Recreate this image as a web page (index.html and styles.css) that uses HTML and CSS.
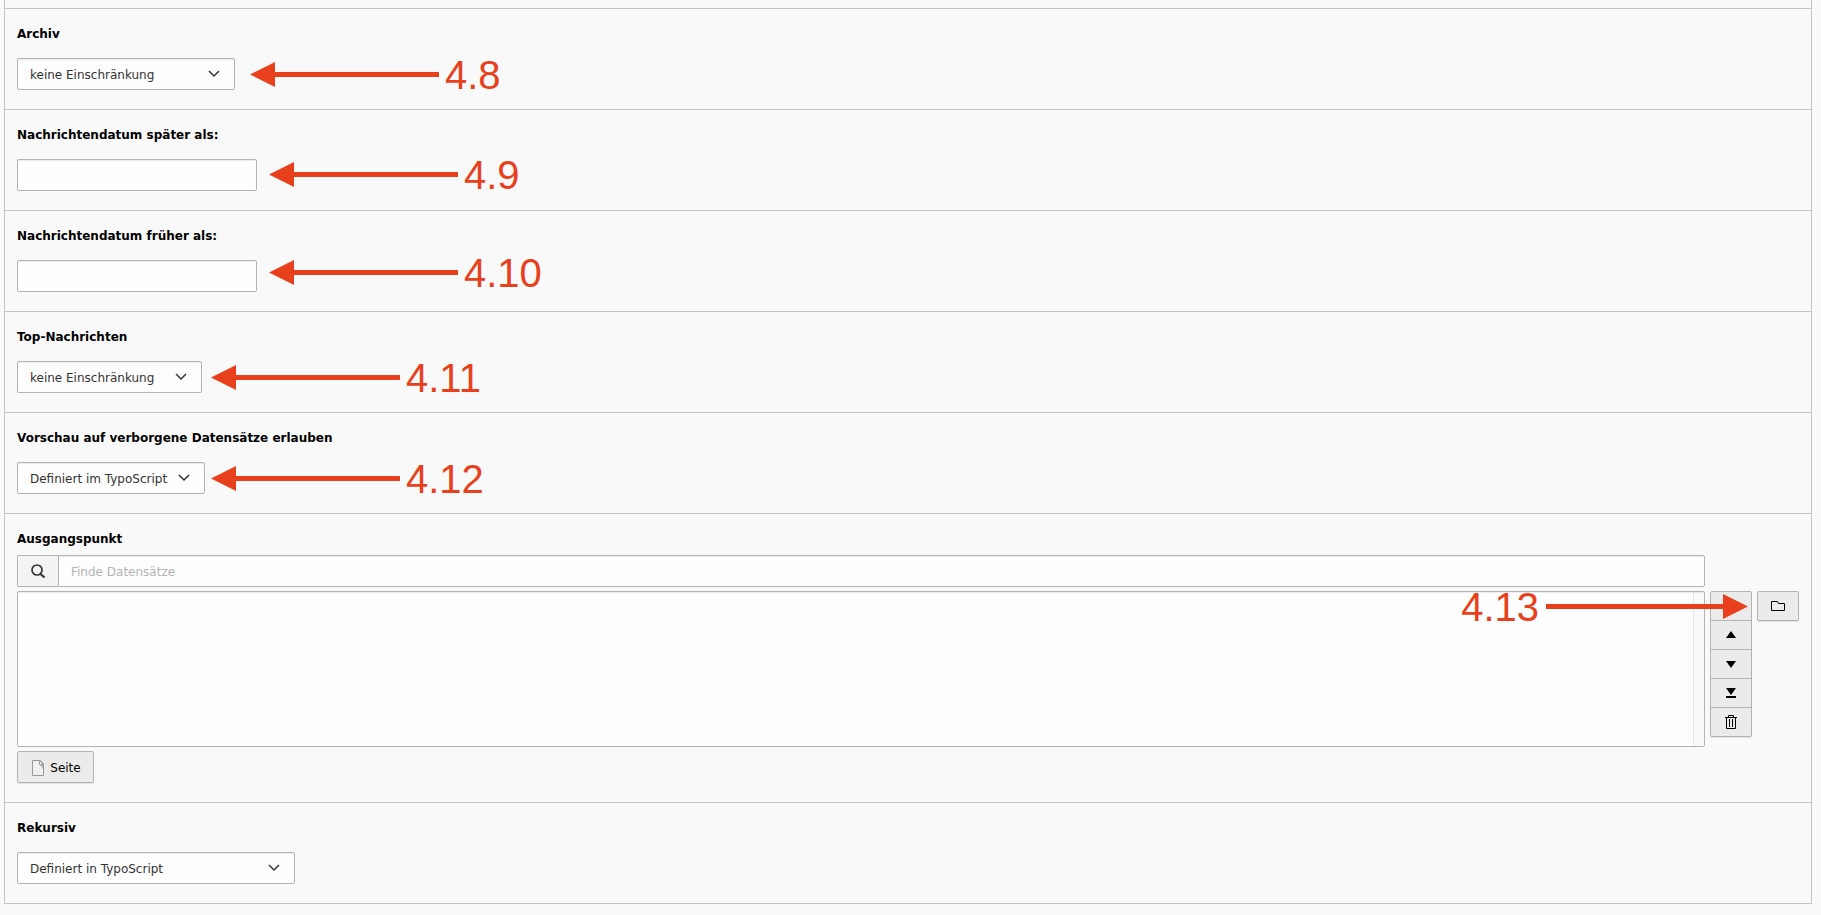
FILE: index.html
```html
<!DOCTYPE html>
<html lang="de">
<head>
    <meta charset="UTF-8">
    <meta name="viewport" content="width=device-width, initial-scale=1.0">
    <title>Plugin-Einstellungen</title>
    <link rel="stylesheet" href="styles.css">
</head>
<body>

<form class="panel">
    <div class="field">
        <label class="field-label" for="archive">Archiv</label>
        <select class="control select w-archive" id="archive">
            <option>keine Einschränkung</option>
        </select>
        <div class="note note-archive">
            <svg class="arrow" width="189" height="25" viewBox="0 0 189 25"><path d="M0 12.500L25 0v10h164v5H25v10z"/></svg>
            <span>4.8</span>
        </div>
    </div>

    <div class="field">
        <label class="field-label" for="date_from">Nachrichtendatum später als:</label>
        <input class="control w-date" type="text" id="date_from">
        <div class="note note-date">
            <svg class="arrow" width="189" height="25" viewBox="0 0 189 25"><path d="M0 12.500L25 0v10h164v5H25v10z"/></svg>
            <span>4.9</span>
        </div>
    </div>

    <div class="field">
        <label class="field-label" for="date_to">Nachrichtendatum früher als:</label>
        <input class="control w-date" type="text" id="date_to">
        <div class="note note-date-to">
            <svg class="arrow" width="189" height="25" viewBox="0 0 189 25"><path d="M0 12.500L25 0v10h164v5H25v10z"/></svg>
            <span>4.10</span>
        </div>
    </div>

    <div class="field">
        <label class="field-label" for="top_news">Top-Nachrichten</label>
        <select class="control select w-top" id="top_news">
            <option>keine Einschränkung</option>
        </select>
        <div class="note note-top">
            <svg class="arrow" width="189" height="25" viewBox="0 0 189 25"><path d="M0 12.500L25 0v10h164v5H25v10z"/></svg>
            <span>4.11</span>
        </div>
    </div>

    <div class="field">
        <label class="field-label" for="preview">Vorschau auf verborgene Datensätze erlauben</label>
        <select class="control select w-preview" id="preview">
            <option>Definiert im TypoScript</option>
        </select>
        <div class="note note-top">
            <svg class="arrow" width="189" height="25" viewBox="0 0 189 25"><path d="M0 12.500L25 0v10h164v5H25v10z"/></svg>
            <span>4.12</span>
        </div>
    </div>

    <div class="field field-records">
        <label class="field-label" for="records">Ausgangspunkt</label>
        <div class="record-grid">
            <div class="search-group">
                <label class="search-icon" for="search" aria-label="Suche">
                    <svg width="16" height="16" viewBox="0 0 16 16"><circle cx="7" cy="7" r="5" fill="none" stroke="#333" stroke-width="1.700"/><path d="M10.500 11l4 3.500" stroke="#333" stroke-width="2.200"/></svg>
                </label>
                <input class="control search-input" type="text" id="search" placeholder="Finde Datensätze">
            </div>
            <select class="record-list" id="records" multiple></select>
            <div class="btn-stack">
                <button class="btn" type="button" aria-label="An den Anfang"></button>
                <button class="btn" type="button" aria-label="Nach oben">
                    <svg width="16" height="16" viewBox="0 0 16 16"><path d="M8 4l5 7H3z"/></svg>
                </button>
                <button class="btn" type="button" aria-label="Nach unten">
                    <svg width="16" height="16" viewBox="0 0 16 16"><path d="M8 12L3 5h10z"/></svg>
                </button>
                <button class="btn" type="button" aria-label="An das Ende">
                    <svg width="16" height="16" viewBox="0 0 16 16"><path d="M8 10L3 3h10zM3 11h10v2H3z"/></svg>
                </button>
                <button class="btn" type="button" aria-label="Entfernen">
                    <svg width="16" height="16" viewBox="0 0 16 16"><path d="M2 3.500h12M5.500 3.500v-2h5v2M3.500 3.500v11h9v-11M6.500 5v8M9.500 5v8" fill="none" stroke="#000"/></svg>
                </button>
            </div>
            <div class="browse">
                <button class="btn" type="button" aria-label="Durchsuchen">
                    <svg width="16" height="16" viewBox="0 0 16 16"><path d="M1.500 12.500v-9h6l1 2h6v7z" fill="none" stroke="#000"/></svg>
                </button>
            </div>
        </div>
        <button class="btn btn-page" type="button">
            <svg width="16" height="16" viewBox="0 0 16 16"><path d="M2.500 0.500h8l3 3v12h-11z" fill="#efefef" stroke="#999"/><path d="M9 4h4v5z" fill="#bbb"/><path d="M9.500 0.500v4h4z" fill="#fff" stroke="#999"/></svg>
            Seite
        </button>
        <div class="note note-browse">
            <span>4.13</span>
            <svg class="arrow" width="202" height="25" viewBox="0 0 202 25"><path d="M202 12.500L177 0v10H0v5h177v10z"/></svg>
        </div>
    </div>

    <div class="field">
        <label class="field-label" for="recursive">Rekursiv</label>
        <select class="control select w-recursive" id="recursive">
            <option>Definiert in TypoScript</option>
        </select>
    </div>
</form>

</body>
</html>
```

FILE: styles.css
```css
* {
    box-sizing: border-box;
}
body {
    margin: 0;
    padding: 0 9px 11px 4px;
    background-color: #fafafa;
    color: #000;
    font-family: Verdana, "DejaVu Sans", sans-serif;
    font-size: 12px;
    line-height: 18px;
}
.panel {
    padding-top: 8px;
    border: 1px solid #c3c3c3;
    border-top: none;
    background-color: #f9f9f9;
}
.field {
    position: relative;
    padding: 16px 12px 19px;
    border-top: 1px solid #c3c3c3;
}
.field-label {
    display: block;
    margin-bottom: 15px;
    font-size: 12px;
    font-weight: bold;
}
.control {
    display: block;
    height: 32px;
    padding: 2px 12px 0;
    border: 1px solid #b3b3b3;
    border-radius: 2px;
    background-color: #fefefe;
    box-shadow: inset 0 1px 1px rgba(0, 0, 0, 0.075);
    color: #333;
    font-family: inherit;
    font-size: 12px;
}
.control::placeholder {
    color: #b3b3b3;
}
.select {
    appearance: none;
    background-image: url("data:image/svg+xml,%3Csvg xmlns='http://www.w3.org/2000/svg' width='12' height='8' viewBox='0 0 12 8'%3E%3Cpath d='M1 1l5 5 5-5' fill='none' stroke='%23333' stroke-width='1.500'/%3E%3C/svg%3E");
    background-repeat: no-repeat;
    background-position: right 14px center;
}
.w-archive {
    width: 218px;
}
.w-date {
    width: 240px;
}
.w-top {
    width: 185px;
}
.w-preview {
    width: 188px;
}
.w-recursive {
    width: 278px;
}

/* record selector */
.field-records .field-label {
    margin-bottom: 7px;
}
.record-grid {
    display: grid;
    grid-template-columns: 1fr 42px 42px;
    gap: 4px 5px;
    margin-bottom: 4px;
}
.search-group {
    display: flex;
    grid-column: 1;
}
.search-icon {
    display: flex;
    align-items: center;
    justify-content: center;
    width: 41px;
    border: 1px solid #b3b3b3;
    border-right: none;
    border-radius: 2px 0 0 2px;
    background-color: #f3f3f3;
}
.search-input {
    flex: 1;
    border-radius: 0 2px 2px 0;
}
.record-list {
    grid-column: 1;
    width: 100%;
    height: 156px;
    border: 1px solid #b3b3b3;
    border-radius: 2px;
    background: linear-gradient(to right, #e6e6e6 1px, #fafafa 1px) right / 11px 100% no-repeat #fefefe;
    box-shadow: inset 0 1px 1px rgba(0, 0, 0, 0.075);
}
.btn {
    display: flex;
    align-items: center;
    justify-content: center;
    width: 42px;
    height: 30px;
    padding: 0;
    border: 1px solid #b3b3b3;
    border-radius: 2px;
    background-color: #ebebeb;
    box-shadow: 0 1px 1px rgba(0, 0, 0, 0.1);
    color: #000;
    font-family: inherit;
    font-size: 12px;
}
.btn-stack .btn + .btn {
    margin-top: -1px;
    border-top-left-radius: 0;
    border-top-right-radius: 0;
}
.btn-stack .btn:not(:last-child) {
    border-bottom-left-radius: 0;
    border-bottom-right-radius: 0;
    box-shadow: none;
}
.btn-page {
    gap: 4px;
    width: 77px;
    height: 32px;
    padding-top: 1px;
}

/* numbered arrows */
.note {
    position: absolute;
    display: flex;
    align-items: center;
    gap: 6px;
    color: #e8401c;
    font-family: "Liberation Sans", Arial, sans-serif;
    font-size: 40px;
    line-height: 40px;
    pointer-events: none;
}
.note span {
    padding-top: 2px;
}
.arrow {
    fill: #e8401c;
}
.note-archive {
    top: 44px;
    left: 245px;
}
.note-date {
    top: 43px;
    left: 264px;
}
.note-date-to {
    top: 40px;
    left: 264px;
}
.note-top {
    top: 44px;
    left: 206px;
}
.note-browse {
    top: 71px;
    right: 63px;
    gap: 7px;
}
```
